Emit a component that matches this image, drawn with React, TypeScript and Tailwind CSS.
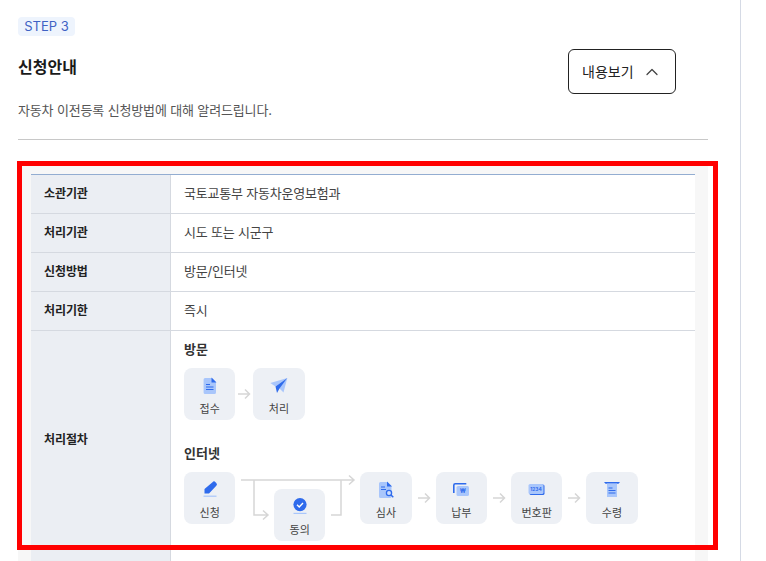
import { ChevronUp } from "lucide-react";
import type { ReactNode } from "react";

const font = "font-['Inter','Noto_Sans_CJK_KR',sans-serif]";

function Arrow() {
  return (
    <svg width="24" height="12" viewBox="0 0 24 12" fill="none" stroke="#d6d6d6" strokeWidth="1.5" className="shrink-0">
      <path d="M6 6H17M13 1.5L17.5 6L13 10.5" />
    </svg>
  );
}

function Tile({ label, icon, className = "" }: { label: string; icon: ReactNode; className?: string }) {
  return (
    <div className={`flex h-[52px] w-[51.33px] shrink-0 flex-col items-center rounded-lg bg-[#edf0f5] pt-[8px] ${className}`}>
      <div className="h-[20px] w-[20px]">{icon}</div>
      <span className="mt-[5px] text-[11px] leading-[16px] text-[#444]">{label}</span>
    </div>
  );
}

const DocIcon = (
  <svg viewBox="0 0 20 20" width="20" height="20">
    <path d="M5 2h7l4 4v10.4a1.6 1.6 0 0 1-1.6 1.6H5.2a1.6 1.6 0 0 1-1.6-1.6V3.6A1.6 1.6 0 0 1 5 2z" fill="#a9c6fb" />
    <path d="M11.5 1.5L16.5 6.5h-5z" fill="#2f6bec" />
    <path d="M6 8.5h4M6 11h7.5M6 13.5h7.5" stroke="#2f6bec" strokeWidth="1.1" />
  </svg>
);

const PlaneIcon = (
  <svg viewBox="0 0 20 20" width="20" height="20">
    <path d="M18.3 2L14.5 16.5L10 12z" fill="#a9c6fb" />
    <path d="M18.3 2L1.3 7L6.5 10.5z" fill="#a9c6fb" />
    <path d="M18.3 2L6.5 10.5L8 17L10.5 12.5z" fill="#2f6bec" />
  </svg>
);

const PenIcon = (
  <svg viewBox="0 0 20 20" width="20" height="20">
    <path d="M12.5 2.2a2 2 0 0 1 3 0l.8.8a2 2 0 0 1 0 2.8l-7.3 7.7H4.5v-4.5z" fill="#2f6bec" />
    <rect x="3.5" y="15.6" width="13" height="1.2" fill="#a9c6fb" />
  </svg>
);

const CheckIcon = (
  <svg viewBox="0 0 20 20" width="20" height="20">
    <circle cx="10" cy="7.6" r="6.6" fill="#2f6bec" />
    <path d="M7 7.8l2.2 2.1 3.8-4" fill="none" stroke="#fff" strokeWidth="1.4" />
    <rect x="3.5" y="15.8" width="13" height="1.2" fill="#a9c6fb" />
  </svg>
);

const SearchDocIcon = (
  <svg viewBox="0 0 20 20" width="20" height="20">
    <path d="M4.5 2h7l4 4v10.4a1.6 1.6 0 0 1-1.6 1.6H4.7A1.6 1.6 0 0 1 3 16.4V3.6A1.6 1.6 0 0 1 4.5 2z" fill="#a9c6fb" />
    <path d="M11 1.5l5 5h-5z" fill="#2f6bec" />
    <path d="M5 7h4M5 9.5h5" stroke="#2f6bec" strokeWidth="1.1" />
    <circle cx="13" cy="13" r="2.6" fill="#cfdffc" stroke="#2f6bec" strokeWidth="1.3" />
    <path d="M15 15l2.3 2.3" stroke="#2f6bec" strokeWidth="1.5" />
  </svg>
);

const PayIcon = (
  <svg viewBox="0 0 20 20" width="20" height="20">
    <path d="M2.8 13V5.2A1.5 1.5 0 0 1 4.3 3.7h11" fill="none" stroke="#2f6bec" strokeWidth="1.6" />
    <rect x="5.5" y="6" width="12.5" height="10" rx="1.6" fill="#a9c6fb" />
    <text x="11.8" y="13" textAnchor="middle" fontSize="5.5" fontWeight="700" fill="#2f6bec">₩</text>
  </svg>
);

const PlateIcon = (
  <svg viewBox="0 0 20 20" width="20" height="20">
    <rect x="2.5" y="4.5" width="15" height="10.5" rx="1.6" fill="#2f6bec" />
    <rect x="1.5" y="4" width="15" height="10" rx="1.6" fill="#a9c6fb" />
    <text x="9" y="11" textAnchor="middle" fontSize="4.8" fontWeight="700" fill="#2f6bec">1234</text>
  </svg>
);

const ReceiveIcon = (
  <svg viewBox="0 0 20 20" width="20" height="20">
    <path d="M2 2h16l-1.5 1.8h-13z" fill="#2f6bec" />
    <rect x="5" y="3.5" width="10" height="13.5" fill="#a9c6fb" />
    <path d="M6.5 8h4M6.5 10.5h7M6.5 13h7" stroke="#2f6bec" strokeWidth="1.1" />
  </svg>
);

function Row({ label, children, tall = false }: { label: string; children?: ReactNode; tall?: boolean }) {
  return (
    <div className={`flex border-b border-[#d5d9e0] ${tall ? "h-[219px]" : "h-[39px]"}`}>
      <div className="flex w-[140px] shrink-0 items-center border-r border-[#d5d9e0] bg-[#ebeef3] pl-[13px] text-[12px] font-bold tracking-[-0.1px] text-[#222]">
        {label}
      </div>
      <div className="flex-1 bg-white">{children}</div>
    </div>
  );
}

function Text({ children }: { children: ReactNode }) {
  return <div className="flex h-full items-center pl-[13px] text-[13px] tracking-[-0.2px] text-[#444]">{children}</div>;
}

export default function App() {
  return (
    <div className={`relative h-[561px] w-[766px] overflow-hidden bg-white ${font}`}>
      <div className="h-full w-[741px] border-r border-[#d5dae5] pl-[18px] pr-[32px] pt-[17px]">
        <div className="flex h-[19px] w-[57px] items-center justify-center rounded bg-[#eef4fd] text-[13px] text-[#3f62c4]">
          STEP 3
        </div>
        <div className="flex items-start justify-between">
          <h2 className="mt-[19px] text-[16px] font-bold leading-[24px] text-[#1a1a1a]">신청안내</h2>
          <button className="mr-[32px] mt-[13px] flex h-[45px] w-[108px] items-center rounded-md border border-[#222] pl-[13px] text-[14px] text-[#222]">
            내용보기
            <ChevronUp size={20} strokeWidth={1.5} className="ml-[8px] text-[#444]" />
          </button>
        </div>
        <p className="mt-[6px] text-[13px] leading-[20px] tracking-[-0.15px] text-[#555]">자동차 이전등록 신청방법에 대해 알려드립니다.</p>
        <div className="mt-[19px] h-px bg-[#c8c8c8]" />
        <div className="mt-[26px] bg-[#f7f7f7] px-[13px] pt-[8px] pb-[40px]">
          <div className="border-t border-[#93add1]">
            <Row label="소관기관"><Text>국토교통부 자동차운영보험과</Text></Row>
            <Row label="처리기관"><Text>시도 또는 시군구</Text></Row>
            <Row label="신청방법"><Text>방문/인터넷</Text></Row>
            <Row label="처리기한"><Text>즉시</Text></Row>
            <Row label="처리절차" tall>
              <div className="pl-[13px] pt-[8px]">
                <div className="text-[13px] font-semibold leading-[20px] text-[#333]">방문</div>
                <div className="mt-[9px] flex items-center">
                  <Tile label="접수" icon={DocIcon} />
                  <div className="mx-[-3px]"><Arrow /></div>
                  <Tile label="처리" icon={PlaneIcon} />
                </div>
                <div className="mt-[23px] text-[13px] font-semibold leading-[20px] text-[#333]">인터넷</div>
                <div className="relative mt-[9px] flex items-start">
                  <Tile label="신청" icon={PenIcon} />
                  <Tile label="동의" icon={CheckIcon} className="ml-[38.67px] mt-[17px]" />
                  <Tile label="심사" icon={SearchDocIcon} className="ml-[35px]" />
                  <div className="mt-[20px]"><Arrow /></div>
                  <Tile label="납부" icon={PayIcon} />
                  <div className="mt-[20px]"><Arrow /></div>
                  <Tile label="번호판" icon={PlateIcon} />
                  <div className="mt-[20px]"><Arrow /></div>
                  <Tile label="수령" icon={ReceiveIcon} />
                  <svg width="120" height="50" viewBox="0 0 120 50" fill="none" stroke="#d6d6d6" strokeWidth="1.5" className="absolute left-[57px] top-0">
                    <path d="M0 8H113M108 3.5L113 8L108 12.5" />
                    <path d="M13 8V43H26M22 38.5L27 43L22 47.5" />
                    <path d="M90 43H100V8" />
                  </svg>
                </div>
              </div>
            </Row>
            <Row label=""></Row>
          </div>
        </div>
      </div>
      <div className="pointer-events-none absolute left-[17px] top-[161px] h-[389px] w-[701px] border-[5px] border-[#ff0000]" />
    </div>
  );
}
